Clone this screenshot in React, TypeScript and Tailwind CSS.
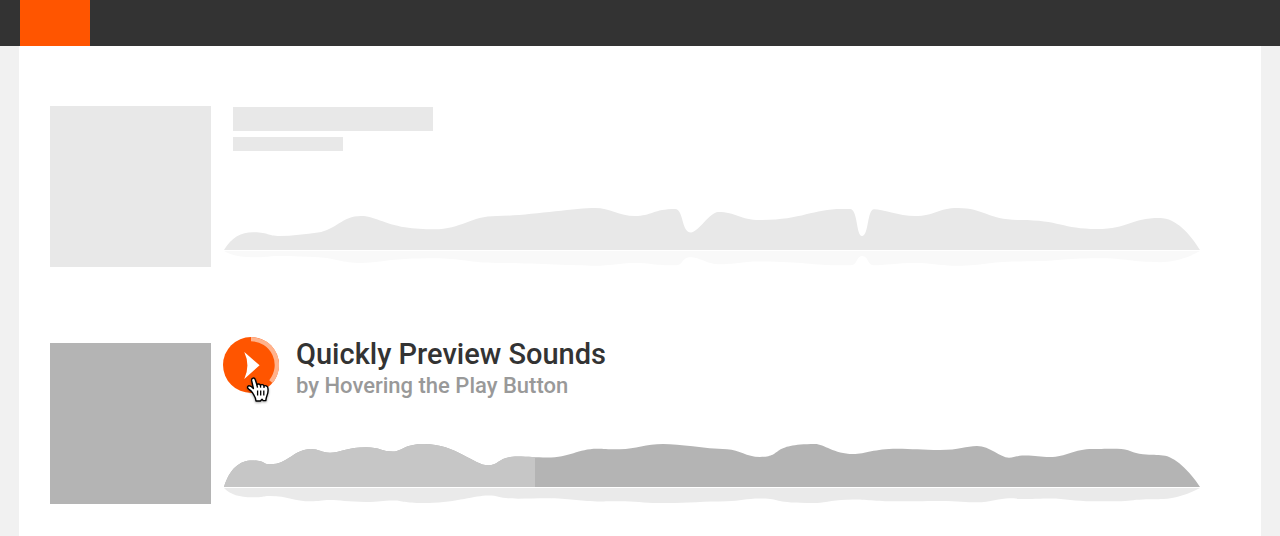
import React from "react";

type WaveProps = {
  path: string;
  base: number;
  label: string;
  topClass: string;
  reflectionClass: string;
  played?: number;
};

const QUIET_WAVE =
  "M0 42C8 29 17 24.3 29 24.3C46 24.3 42 28 56 28C68 28 82 26 94 24.5C112 22 118 8 137 8C150 8 160 16 181 19.3C190 20.8 200 21.3 210 21.3C238 21.3 246 8 273 8C302 8 350 0 371 0C386 0 395 8 411 8C427 8 430 1 451 1C460 1 457 24.5 467 24.5C474 24.5 486 4 494 4C512 4 516 12 536 12C578 12 588 1 618 1L626 1C634 1 632 28 638 28C645 28 643 1.3 650 1.3C658 1.3 675 8 691 8C711 8 714 0 734 0C760 0 764 12 796 12C836 12 838 21 873 21C905 21 906 10 936 10C952 10 966 26 976 42Z";

const ACTIVE_WAVE =
  "M0 43C6 24 16 16.5 28 16.5C42 16.5 38 20.3 46 20.3C64 20.3 70 5 87 5C95 5 97 8.7 106 8.7C115 8.7 124 3.2 142 3.2C156 3.2 158 7.5 169 7.5C178 7.5 180 0 200 0C232 0 250 21.3 264 21.3C276 21.3 274 12.5 294 12.5C304 12.5 312 13.5 323 13.5C346 13.5 354 4.7 373 4.7C381 4.7 384 5.5 396 5.3C412 5 422 0 439 0C456 0 480 4.5 503 5.3C516 6 522 13 536 13C560 13 544 0 591 0C600 0 610 10 629 10C642 10 650 4.8 673 4.8C688 4.8 698 6 716 6C735 6 742 2 753 2C766 2 776 13.7 785 13.7C791 13.7 792 11.5 801 11.5C812 11.5 816 13 826 13C842 13 850 5 869 5C877 5 883 4.8 893 4.8C906 4.8 908 9.7 919 10.2C928 11 933 10.5 939 11.5C950 12 966 27 976 43Z";

function Waveform({ path, base, label, topClass, reflectionClass, played }: WaveProps) {
  const clipId = `${label}-clip`;
  return (
    <svg
      className="block h-[59px] w-full"
      viewBox={`0 ${base - 43} 976 59`}
      preserveAspectRatio="none"
      aria-hidden="true"
    >
      <defs>
        <clipPath id={clipId}>
          <path d={path} />
        </clipPath>
      </defs>
      <path d={path} className={topClass} />
      {played !== undefined && (
        <rect width={played} height={base} clipPath={`url(#${clipId})`} className="fill-[#c6c6c6]" />
      )}
      <path
        d={path}
        transform={`translate(0 ${base + 1 + base * 0.35}) scale(1 -0.35)`}
        className={reflectionClass}
      />
    </svg>
  );
}

function PlayButton() {
  return (
    <button type="button" aria-label="Play" className="relative size-14 shrink-0 cursor-pointer rounded-full">
      <svg viewBox="0 0 56 56" className="size-14" aria-hidden="true">
        <circle cx="28" cy="28" r="28" fill="#f50" />
        <path d="M28 0A28 28 0 0 1 49.5 46L46.2 43.2A23.8 23.8 0 0 0 28 4.2Z" fill="#ffb28c" />
        <path d="M21.3 15L36.6 28.3L21.3 42Q27.5 28.3 21.3 15Z" fill="#fff" />
      </svg>
      <svg
        viewBox="0 0 24 28"
        className="absolute top-[39px] left-[23px] h-7 w-6 drop-shadow-[0_1px_1px_rgba(0,0,0,0.35)]"
        aria-hidden="true"
      >
        <path
          d="M6.6 16.8C5.4 15 4.2 14.2 2.6 13C1.3 12 1.2 10.6 2.2 10C3.4 9.4 5.4 10.4 7.4 12.4L5.7 4.9C5.4 3.2 6 2.3 7 2.1C8.2 1.9 9 2.7 9.4 4L10.9 8.8C11.8 7.7 13.8 7.8 14.4 9.2C15.4 8.2 17.4 8.5 18 10C19.4 9.2 21.2 9.8 21.7 11.4C22.4 14 22 17 21 19.4C20.3 21.2 20 22.4 19.8 24.6L17.2 24.6L16 23.2L14.4 25L10 25C9.9 21.6 8.2 19.6 6.6 16.8Z"
          fill="#fff"
          stroke="#000"
          strokeWidth="1.4"
          strokeLinejoin="round"
        />
        <path d="M10.9 8.8L11.5 11.6M14.4 9.2L14.7 11.6M18 10L18 12M11.6 14.4V19.6M14.7 14.4V19.6M17.8 14.4V19.6" fill="none" stroke="#000" strokeWidth="1.3" />
      </svg>
    </button>
  );
}

export default function App() {
  return (
    <div className="flex min-h-screen flex-col bg-[#f1f1f1] font-['Roboto',sans-serif]">
      <header className="flex h-[46px] bg-[#333] px-5">
        <a href="#" aria-label="Home" className="block w-[70px] bg-[#f50]" />
      </header>
      <main className="mx-[19px] flex grow flex-col gap-[76px] bg-white px-[31px] pt-[60px] pb-8">
        <article className="flex gap-3">
          <div className="size-[161px] shrink-0 bg-[#e8e8e8]" />
          <div className="flex min-w-0 grow flex-col justify-between pt-px pr-[30px]">
            <div className="flex flex-col gap-1.5 pl-2.5">
              <div className="h-6 w-[200px] bg-[#e8e8e8]" />
              <div className="h-3.5 w-[110px] bg-[#e8e8e8]" />
            </div>
            <div className="pb-px pl-px">
              <Waveform
                label="quiet"
                path={QUIET_WAVE}
                base={42}
                topClass="fill-[#e8e8e8]"
                reflectionClass="fill-[#f9f9f9]"
              />
            </div>
          </div>
        </article>
        <article className="flex gap-3">
          <div className="size-[161px] shrink-0 bg-[#b4b4b4]" />
          <div className="-mt-1.5 flex min-w-0 grow flex-col justify-between pr-[30px]">
            <div className="flex gap-[17px]">
              <PlayButton />
              <div className="font-medium">
                <h1 className="text-[29px] leading-[34px] text-[#333]">Quickly Preview Sounds</h1>
                <p className="text-[22px] leading-[30px] text-[#999]">by Hovering the Play Button</p>
              </div>
            </div>
            <div className="pb-px pl-px">
              <Waveform
                label="active"
                path={ACTIVE_WAVE}
                base={43}
                topClass="fill-[#b4b4b4]"
                reflectionClass="fill-[#eaeaea]"
                played={311}
              />
            </div>
          </div>
        </article>
      </main>
    </div>
  );
}
